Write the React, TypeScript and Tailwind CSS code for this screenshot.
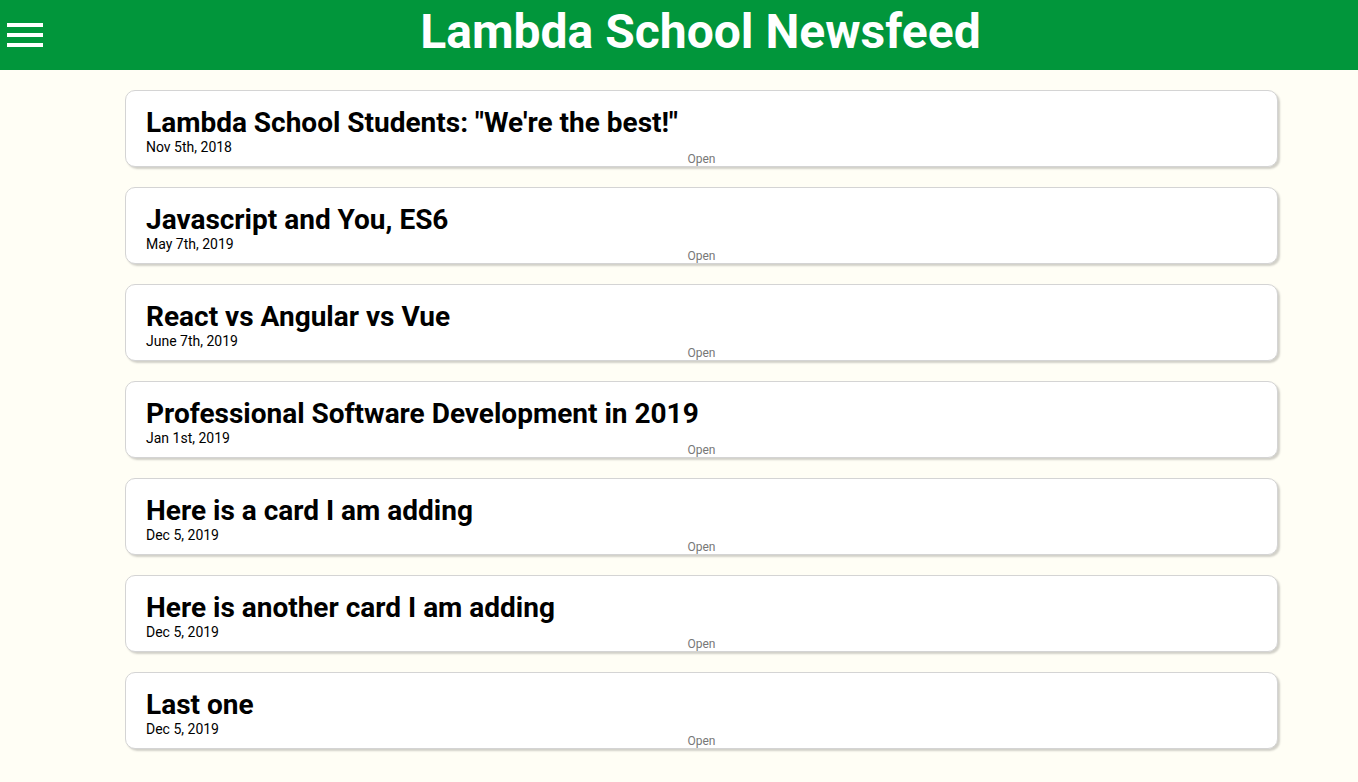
const articles = [
  { title: 'Lambda School Students: "We\'re the best!"', date: 'Nov 5th, 2018' },
  { title: 'Javascript and You, ES6', date: 'May 7th, 2019' },
  { title: 'React vs Angular vs Vue', date: 'June 7th, 2019' },
  { title: 'Professional Software Development in 2019', date: 'Jan 1st, 2019' },
  { title: 'Here is a card I am adding', date: 'Dec 5, 2019' },
  { title: 'Here is another card I am adding', date: 'Dec 5, 2019' },
  { title: 'Last one', date: 'Dec 5, 2019' },
]

function Article({ title, date }: { title: string; date: string }) {
  return (
    <div className="rounded-[10px] border border-[#d4d4d4] bg-white px-[20px] pt-[15px] pb-px shadow-[2px_2px_2px_rgba(0,0,0,0.18)]">
      <h2 className="text-[28px] font-bold leading-[34px] text-black">{title}</h2>
      <p className="text-[14px] leading-[14px] text-black">{date}</p>
      <span className="-mt-px block text-center text-[12px] leading-[12px] text-[#777]">Open</span>
    </div>
  )
}

export default function App() {
  return (
    <div className="min-h-[782px] bg-[#fffef5] font-['Roboto',sans-serif]">
      <header className="flex h-[70px] items-center bg-[#01963b]">
        <div className="ml-[7px] flex w-[36px] flex-col gap-[6px]">
          <span className="block h-[4px] bg-white" />
          <span className="block h-[4px] bg-white" />
          <span className="block h-[4px] bg-white" />
        </div>
        <h1 className="flex-1 pb-[6px] text-center text-[48px] font-bold leading-[64px] text-white">
          Lambda School Newsfeed
        </h1>
      </header>
      <main className="ml-[125px] flex w-[1153px] flex-col gap-[20px] pt-[20px]">
        {articles.map((a) => (
          <Article key={a.title} title={a.title} date={a.date} />
        ))}
      </main>
    </div>
  )
}
